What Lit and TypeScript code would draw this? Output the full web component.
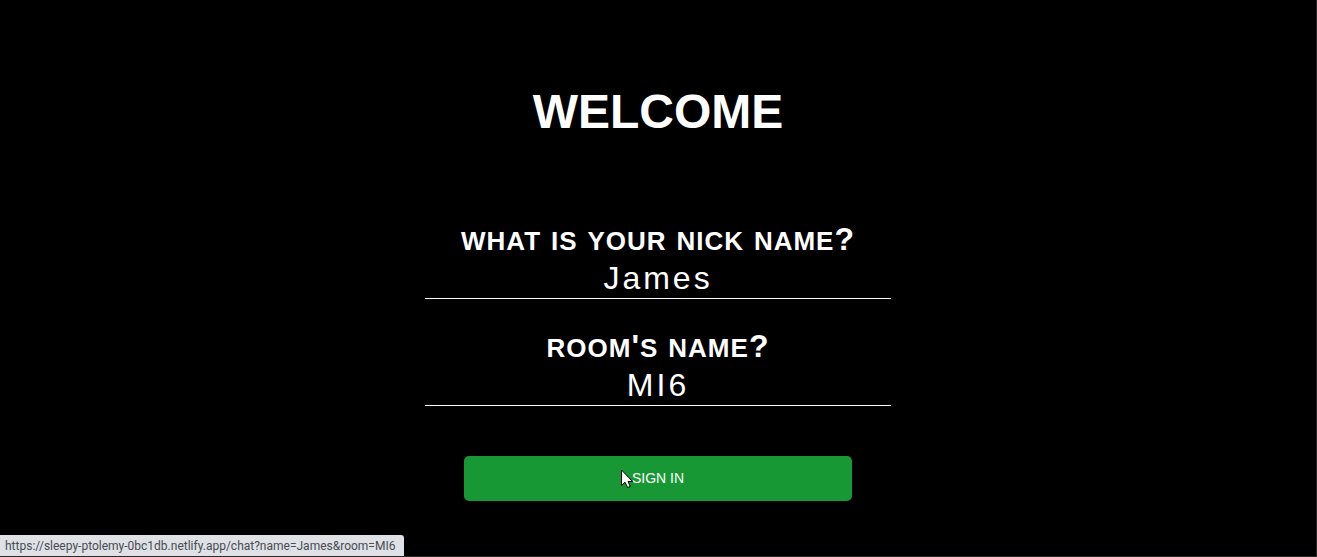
import { LitElement, html, css, svg } from "lit";
import { customElement, property, state } from "lit/decorators.js";

@customElement("name-field")
export class NameField extends LitElement {
  @property() label = "";
  @property() value = "";

  static styles = css`
    :host {
      display: flex;
      flex-direction: column;
      align-items: center;
      width: 100%;
      color: #fff;
    }
    .label {
      padding-top: 1px;
      font-size: 26px;
      font-weight: 700;
      line-height: 38px;
      letter-spacing: 1px;
      text-transform: uppercase;
      white-space: nowrap;
    }
    .mark {
      font-size: 32px;
      line-height: 32px;
    }
    .input {
      box-sizing: border-box;
      width: 100%;
      height: 39px;
      padding: 0 0 2px;
      border: 0;
      border-bottom: 1px solid #fff;
      border-radius: 0;
      outline: none;
      background: transparent;
      color: inherit;
      font-family: inherit;
      font-size: 32px;
      letter-spacing: 3px;
      text-align: center;
    }
  `;

  // Letters sit at small-cap size; spaces and punctuation keep the full size.
  private renderLabel() {
    return this.label
      .split(/([ '?])/)
      .filter((part) => part !== "")
      .map((part) => (/[ '?]/.test(part) ? html`<span class="mark">${part}</span>` : part));
  }

  private onInput(event: Event) {
    this.value = (event.target as HTMLInputElement).value;
    this.dispatchEvent(new CustomEvent("value-change", { detail: this.value }));
  }

  render() {
    return html`
      <label class="label" for="field">${this.renderLabel()}</label>
      <input class="input" id="field" type="text" autocomplete="off" spellcheck="false" .value=${this.value} @input=${this.onInput} />
    `;
  }
}

@customElement("app-root")
export class AppRoot extends LitElement {
  @state() private nick = "James";
  @state() private room = "MI6";

  static styles = css`
    :host {
      display: block;
      font-family: "Liberation Sans", Arial, sans-serif;
    }
    .page {
      position: relative;
      box-sizing: border-box;
      display: flex;
      flex-direction: column;
      align-items: center;
      min-height: 100vh;
      padding: 84px 16px 55px;
      border-right: 1px solid #2b2727;
      border-bottom: 1px solid #2b2727;
      background: #000;
      color: #fff;
    }
    .title {
      margin: 0 0 82px;
      font-size: 48px;
      font-weight: 700;
      line-height: 55px;
    }
    .form {
      display: flex;
      flex-direction: column;
      align-items: center;
      gap: 29px;
      width: 100%;
      max-width: 466px;
    }
    .submit {
      position: relative;
      width: 388px;
      max-width: 100%;
      height: 45px;
      margin-top: 21px;
      padding: 0 0 2px;
      border: 0;
      border-radius: 5px;
      background: #189834;
      color: #fff;
      font-family: inherit;
      font-size: 14px;
      text-transform: uppercase;
      cursor: pointer;
    }
    .pointer {
      position: absolute;
      top: 13px;
      left: 157px;
      width: 12px;
      height: 19px;
    }
    .status {
      position: absolute;
      bottom: 0;
      left: 0;
      box-sizing: border-box;
      height: 21px;
      padding: 0 9px 0 5px;
      border-top-right-radius: 3px;
      background: #dee1e6;
      color: #494c50;
      font-family: Roboto, "Noto Sans", sans-serif;
      font-size: 12px;
      line-height: 22px;
      white-space: nowrap;
    }
  `;

  render() {
    const target = `https://sleepy-ptolemy-0bc1db.netlify.app/chat?name=${this.nick}&room=${this.room}`;
    return html`
      <main class="page">
        <h1 class="title">WELCOME</h1>
        <form class="form" @submit=${(e: Event) => e.preventDefault()}>
          <name-field
            label="What is your nick name?"
            .value=${this.nick}
            @value-change=${(e: CustomEvent<string>) => (this.nick = e.detail)}
          ></name-field>
          <name-field
            label="Room's name?"
            .value=${this.room}
            @value-change=${(e: CustomEvent<string>) => (this.room = e.detail)}
          ></name-field>
          <button class="submit" type="submit">
            Sign in
            <svg class="pointer" viewBox="0 0 12 19" aria-hidden="true">
              ${svg`<path d="M.5 1V16.5L4 13.2L6.6 18.5L9.3 17.4L7 12.5H11.6Z" fill="#fff" stroke="#000" stroke-width="1"/>`}
            </svg>
          </button>
        </form>
        <div class="status">${target}</div>
      </main>
    `;
  }
}
